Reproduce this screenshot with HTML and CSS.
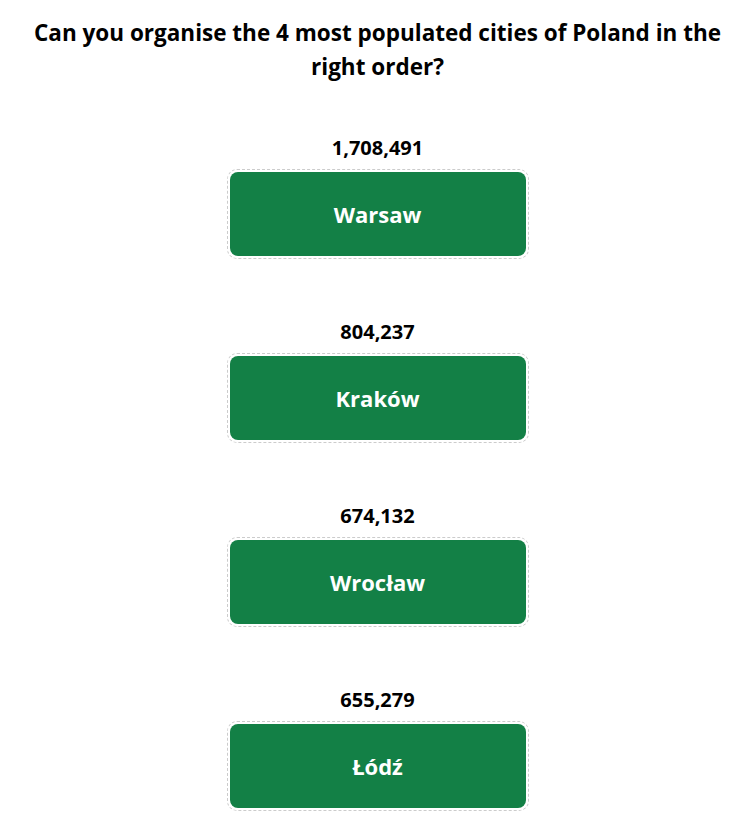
FILE: index.html
```html
<!DOCTYPE html>
<html lang="en">
<head>
  <meta charset="UTF-8">
  <meta name="viewport" content="width=device-width, initial-scale=1.0">
  <title>Poland Cities Quiz</title>
  <link rel="stylesheet" href="styles.css">
</head>
<body>

  <div class="quiz">
    <h2>Can you organise the 4 most populated cities of Poland in the right order?</h2>

    <div class="list">
      <div class="item">
        <div class="population">1,708,491</div>
        <div class="slot"><div class="city">Warsaw</div></div>
      </div>
      <div class="item">
        <div class="population">804,237</div>
        <div class="slot"><div class="city">Kraków</div></div>
      </div>
      <div class="item">
        <div class="population">674,132</div>
        <div class="slot"><div class="city">Wrocław</div></div>
      </div>
      <div class="item">
        <div class="population">655,279</div>
        <div class="slot"><div class="city">Łódź</div></div>
      </div>
    </div>
  </div>

</body>
</html>
```

FILE: styles.css
```css
body {
  font-family: 'Open Sans', 'Noto Sans', sans-serif;
  margin: 0;
  padding: 0;
  background-color: #fff;
  color: #000;
}
.quiz {
  display: flex;
  flex-direction: column;
  align-items: center;
  padding: 16px 20px;
}
h2 {
  font-size: 22.5px;
  font-weight: 700;
  line-height: 34px;
  text-align: center;
  margin: 0;
}
.list {
  display: flex;
  flex-direction: column;
  gap: 61px;
  margin-top: 52px;
}
.item {
  display: flex;
  flex-direction: column;
  align-items: center;
}
.population {
  font-size: 20px;
  font-weight: 700;
  line-height: 24px;
  margin-bottom: 9px;
}
.slot {
  width: 296px;
  padding: 2px;
  border: 1px dashed #ccc;
  border-radius: 10px;
}
.city {
  height: 84px;
  display: flex;
  justify-content: center;
  align-items: center;
  background-color: #138046;
  color: #fff;
  font-size: 22px;
  font-weight: 700;
  border-radius: 8px;
}
```
